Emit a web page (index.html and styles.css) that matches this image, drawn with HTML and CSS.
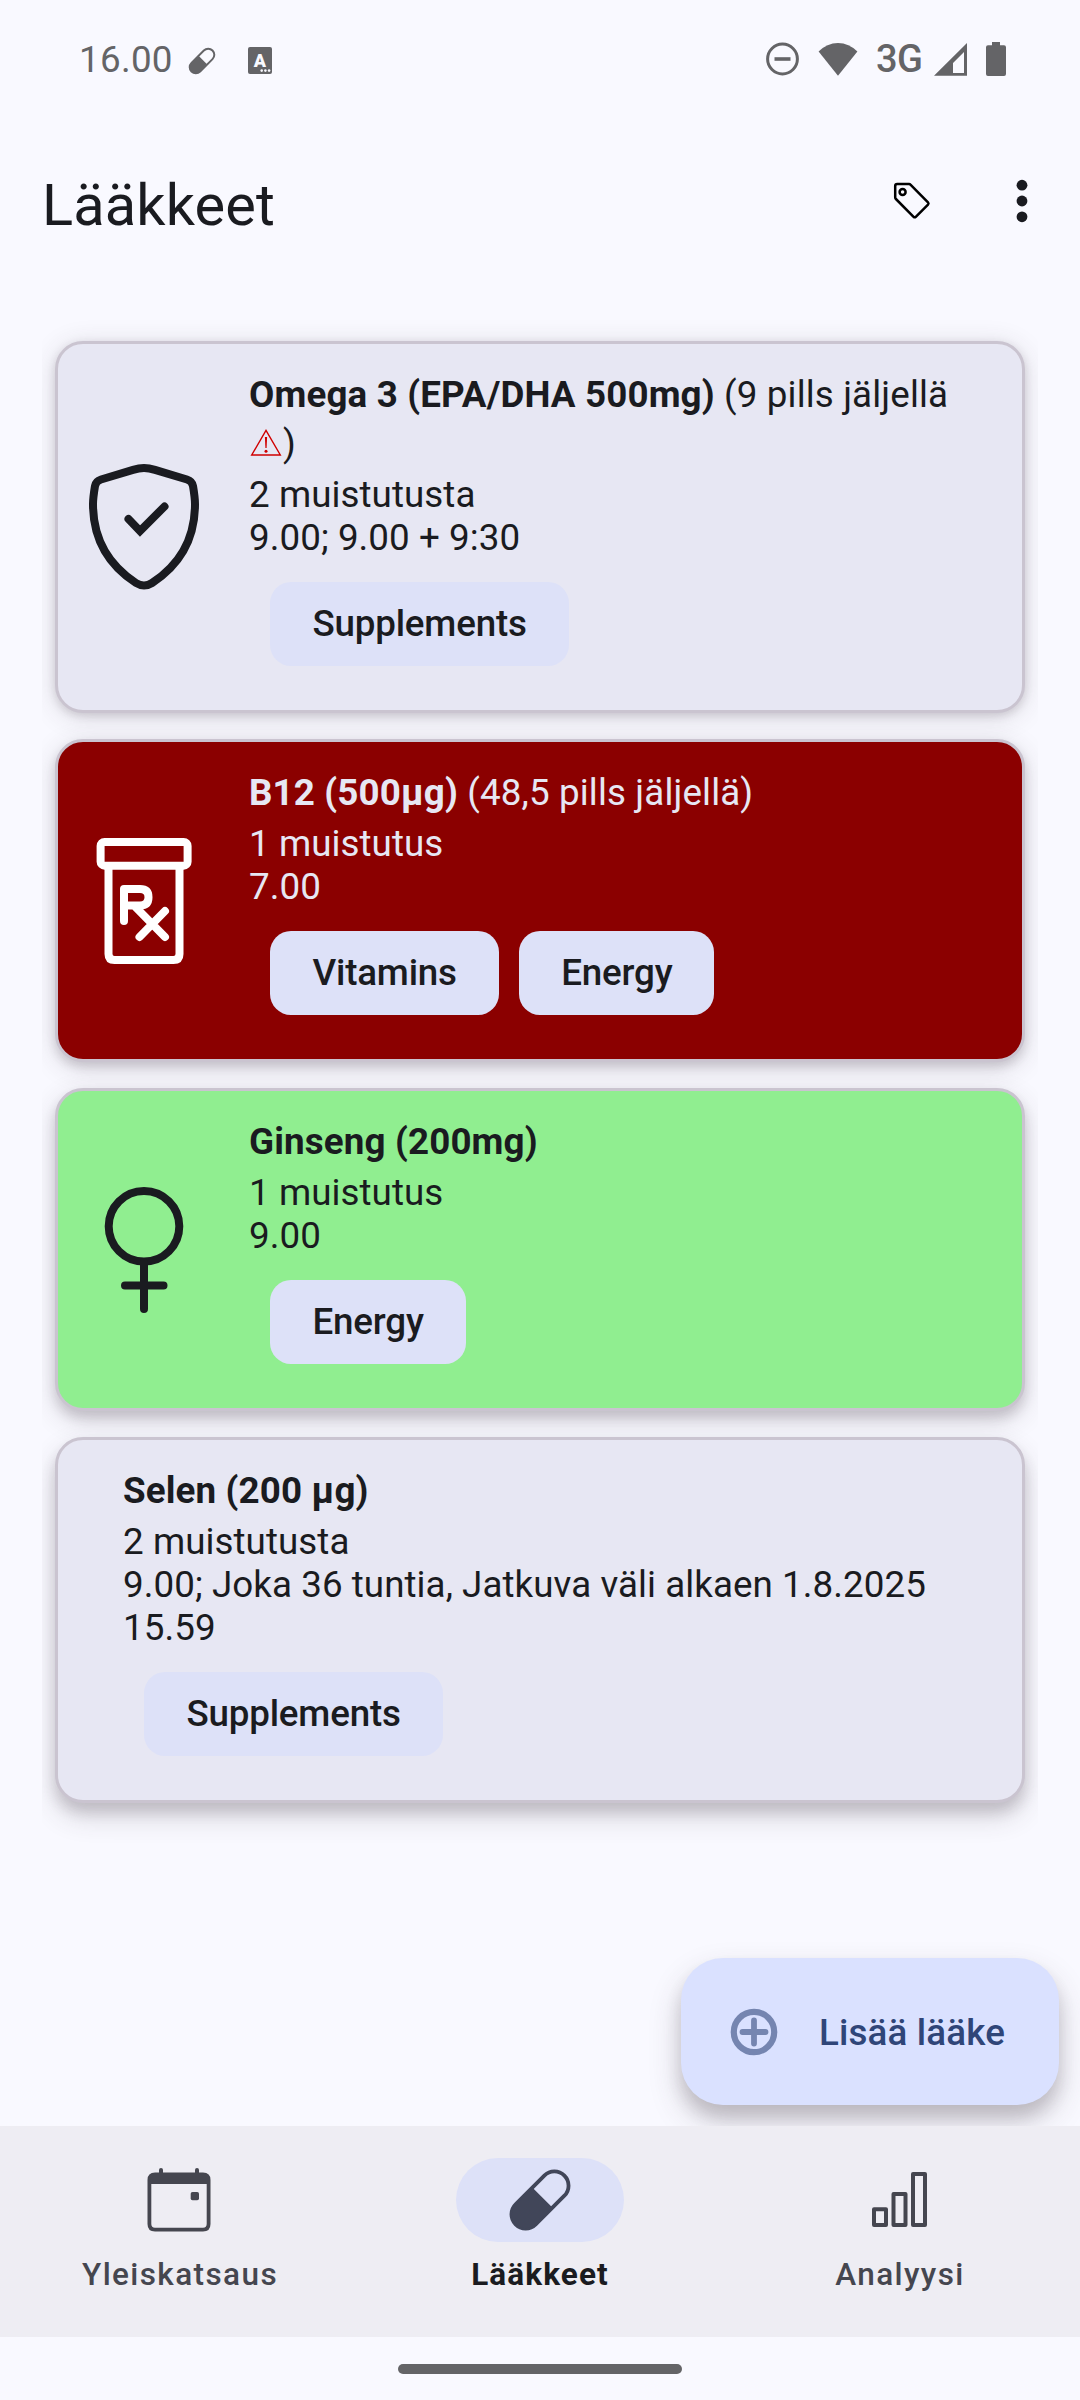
FILE: index.html
```html
<!DOCTYPE html>
<html lang="fi">
<head>
<meta charset="utf-8">
<title>Lääkkeet</title>
<link rel="stylesheet" href="styles.css">
</head>
<body>
<header class="status">
  <span class="clock">16.00</span>
  <svg class="status-pill" width="28" height="28" viewBox="-32 -32 64 64"><g transform="rotate(-45)"><rect x="-34" y="-14" width="68" height="28" rx="14" fill="none" stroke="currentColor" stroke-width="4.5"/><path d="M3-14H-20A14 14 0 0 0-20 14H3z" fill="currentColor"/></g></svg>
  <svg class="status-letter" width="24" height="27" viewBox="0 0 24 27"><rect width="24" height="27" rx="2" fill="currentColor"/><text x="12" y="19.6" class="letter-a">A</text><g fill="#f9f9ff"><circle cx="13.7" cy="23.6" r="1.3"/><circle cx="17.4" cy="23.6" r="1.3"/><circle cx="21.1" cy="23.6" r="1.3"/></g></svg>
  <div class="status-right">
    <svg width="33" height="34" viewBox="0 0 33 34"><circle cx="16.5" cy="17" r="14.9" fill="none" stroke="currentColor" stroke-width="3"/><path d="M8.5 17h16" stroke="currentColor" stroke-width="3.6"/></svg>
    <svg class="wifi" width="40" height="34" viewBox="0 0 40 34"><path d="M.6 9.6Q9 1 20 1T39.4 9.6L20 33.7z" fill="currentColor"/></svg>
    <span class="network">3G</span>
    <svg class="signal" width="33" height="34" viewBox="0 0 33 34"><path fill-rule="evenodd" d="M0 33.7L33 1V33.7zM19 21V31H30V10z" fill="currentColor"/></svg>
    <svg class="battery" width="20" height="34" viewBox="0 0 20 34"><path d="M6 0h8v3.300h4a2 2 0 0 1 2 2V32a2 2 0 0 1-2 2H2a2 2 0 0 1-2-2V5.300a2 2 0 0 1 2-2h4z" fill="currentColor"/></svg>
  </div>
</header>

<div class="toolbar">
  <h1>Lääkkeet</h1>
  <svg class="tag" width="38" height="38" viewBox="0 0 38 38" fill="none" stroke="#000" stroke-width="2.500" stroke-linejoin="round"><path d="M4.200 2.100H16Q17 2.100 17.700 2.800L35 20.400Q36 21.500 35 22.600L22.800 34.800Q21.700 35.900 20.600 34.800L2.900 17Q2.200 16.300 2.200 15.300V4.100Q2.200 2.100 4.200 2.100z"/><circle cx="9.600" cy="9.900" r="3"/></svg>
  <svg class="more" width="12" height="44" viewBox="0 0 12 44" fill="#1a1b20"><circle cx="6" cy="6.200" r="5.400"/><circle cx="6" cy="22" r="5.400"/><circle cx="6" cy="37.800" r="5.400"/></svg>
</div>

<main>
  <div class="list">
    <article class="card shade-1">
      <svg class="icon" width="126" height="126" viewBox="0 0 126 126" fill="none" stroke="currentColor" stroke-width="8" stroke-linecap="round"><path d="M63 4Q58 4 52 5.800L20 15.500Q15 17 14 22C13 28 12 34 12 40C12 76 29 102 55 119Q63 124 71 119C97 102 114 76 114 40C114 34 113 28 112 22Q111 17 106 15.500L74 5.800Q68 4 63 4z"/><path d="M47.500 55L59 67L83.500 42.500"/></svg>
      <div class="body">
        <p class="name"><b>Omega 3 (EPA/DHA 500mg)</b> (9 pills jäljellä <span class="low"><svg class="warn" width="34" height="27" viewBox="0 0 34 27"><path d="M17 1.400L31.300 26H2.700z" fill="none" stroke="#d00000" stroke-width="1.400"/><path d="M15.900 8h2.200l-.5 11h-1.200z" fill="#d00000"/><circle cx="17" cy="22.300" r="1.500" fill="#d00000"/></svg>)</span></p>
        <p>2 muistutusta<br>9.00; 9.00 + 9:30</p>
        <div class="chips"><span class="chip">Supplements</span></div>
      </div>
    </article>

    <article class="card red shade-2">
      <svg class="icon white" width="126" height="126" viewBox="0 0 126 126" fill="none" stroke="currentColor" stroke-width="8" stroke-linecap="round" stroke-linejoin="round"><rect x="19.600" y="4" width="87" height="23.700" rx="4"/><path d="M27.500 28V116Q27.500 122 33.500 122H92.500Q98.500 122 98.500 116V28"/><path d="M43 83V51H59Q67.500 51 67.500 59.200T59 67.400H45M53.500 68L84 99M84 73L58.500 99"/></svg>
      <div class="body">
        <p class="name"><b>B12 (500µg)</b> (48,5 pills jäljellä)</p>
        <p>1 muistutus<br>7.00</p>
        <div class="chips"><span class="chip">Vitamins</span><span class="chip">Energy</span></div>
      </div>
    </article>

    <article class="card green shade-3">
      <svg class="icon" width="126" height="126" viewBox="0 0 126 126" fill="none" stroke="currentColor" stroke-width="8" stroke-linecap="round"><circle cx="63" cy="39.300" r="35.300"/><path d="M63 75V122M44 98.500H82.500"/></svg>
      <div class="body">
        <p class="name"><b>Ginseng (200mg)</b></p>
        <p>1 muistutus<br>9.00</p>
        <div class="chips"><span class="chip">Energy</span></div>
      </div>
    </article>

    <article class="card plain shade-4">
      <div class="body">
        <p class="name"><b>Selen (200 µg)</b></p>
        <p>2 muistutusta<br>9.00; Joka 36 tuntia, Jatkuva väli alkaen 1.8.2025 15.59</p>
        <div class="chips"><span class="chip">Supplements</span></div>
      </div>
    </article>
  </div>

  <button class="fab">
    <svg width="48" height="48" viewBox="0 0 48 48" fill="none" stroke="#7585b0" stroke-width="6.200"><circle cx="24" cy="24" r="20.200"/><path d="M24 12.500V35.500M12.500 24H35.500" stroke-linecap="round" stroke-width="5.800"/></svg>
    <span class="fab-label">Lisää lääke</span>
  </button>
</main>

<nav class="tabs">
  <a class="tab">
    <span class="pad"><svg class="calendar" width="64" height="64" viewBox="0 0 64 64" fill="currentColor"><path fill-rule="evenodd" d="M8 4.500H12V2a2 2 0 0 1 4 0V4.500H48V2a2 2 0 0 1 4 0V4.500H56Q63.500 4.500 63.500 12V56Q63.500 63.500 56 63.500H8Q.5 63.500 .5 56V12Q.5 4.500 8 4.500zM4.300 16V56Q4.300 59.700 8 59.700H56Q59.700 59.700 59.700 56V16z"/><rect x="43.700" y="24" width="8.300" height="8.300" rx="1.800"/></svg></span>
    <span class="label">Yleiskatsaus</span>
  </a>
  <a class="tab active">
    <span class="pad"><svg width="64" height="64" viewBox="-32 -32 64 64"><g transform="rotate(-45)"><rect x="-34.500" y="-14.200" width="69" height="28.400" rx="14.200" fill="none" stroke="currentColor" stroke-width="3.800"/><path d="M3.500-14H-20A14 14 0 0 0-20 14H3.500z" fill="currentColor"/></g></svg></span>
    <span class="label">Lääkkeet</span>
  </a>
  <a class="tab">
    <span class="pad"><svg width="64" height="64" viewBox="0 0 64 64" fill="none" stroke="currentColor" stroke-width="4" stroke-linejoin="round"><rect x="6" y="41.300" width="12" height="15.700"/><rect x="25.500" y="26" width="12" height="31"/><rect x="45" y="6" width="12" height="51"/></svg></span>
    <span class="label">Analyysi</span>
  </a>
</nav>
<footer class="gesture"><span class="handle"></span></footer>
</body>
</html>
```
FILE: styles.css
```css
* { box-sizing: border-box; margin: 0; padding: 0; }

body {
  display: flex;
  flex-direction: column;
  width: 1080px;
  height: 2400px;
  overflow: hidden;
  background: #f9f9ff;
  color: #1a1b20;
  font: 36.75px/43px Roboto, sans-serif;
}

svg { display: block; flex: none; }

.status {
  display: flex;
  align-items: center;
  height: 118px;
  padding: 0 74px 0 79px;
  color: #646467;
}
.clock { width: 109px; letter-spacing: .3px; }
.status-pill { margin-top: 3px; }
.status-letter { margin: 2px 0 0 32px; }
.letter-a {
  fill: #f9f9ff;
  font: 900 18px Roboto, sans-serif;
  text-anchor: middle;
}
.status-right { display: flex; align-items: center; margin-left: auto; }
.wifi { margin-left: 19px; }
.network { margin: 0 0 0 18px; width: 58px; font-size: 38px; font-weight: 500; letter-spacing: -.6px; }
.battery { margin-left: 19px; }

.toolbar {
  display: flex;
  align-items: flex-start;
  height: 174px;
  padding: 53px 52px 0 42px;
}
.toolbar h1 { flex: 1; font-size: 57.75px; font-weight: 400; line-height: 68px; letter-spacing: .12px; }
.tag { margin: 10.500px 85px 0 0; }
.more { margin-top: 8px; }

main { position: relative; height: 1834px; }

.list {
  display: flex;
  flex-direction: column;
  gap: 26px;
  margin: 0 42px;
  padding: 49px 13px 0;
  overflow-x: clip;
}

.card {
  display: flex;
  align-items: center;
  padding: 29px 32px 44px 22px;
  border: 3px solid #cac4d0;
  border-radius: 28px;
  background: #e7e7f3;
}
.icon { margin: 15px 42px 0 1px; }
.white { color: #fff; }
.plain { padding-left: 65px; }
.body { flex: 1; letter-spacing: .06px; }
.red { background: #8b0000; color: #e7e7f3; }
.green { background: #90ee90; }
.shade-1 { box-shadow: 0 3px 8px rgba(60, 50, 60, .16), 0 4px 26px rgba(60, 50, 60, .17); }
.shade-2 { box-shadow: 0 5px 10px rgba(60, 50, 60, .16), 0 6px 26px rgba(60, 50, 60, .18); }
.shade-3 { box-shadow: 0 7px 11px rgba(60, 50, 60, .16), 0 9px 27px rgba(60, 50, 60, .19); }
.shade-4 { box-shadow: 0 9px 13px rgba(60, 50, 60, .16), 0 13px 28px rgba(60, 50, 60, .2); }

.name { margin-bottom: 8px; letter-spacing: .14px; }
.name b { font-weight: 700; }
.low { white-space: nowrap; }
.warn { display: inline-block; margin-top: 13px; vertical-align: baseline; }

.chips { display: flex; gap: 20px; margin: 23px 0 0 21px; }
.chip {
  height: 84px;
  padding: 0 42px 0 42.500px;
  border-radius: 21px;
  background: #dde1f8;
  color: #1a1b20;
  font-weight: 500;
  line-height: 84px;
  letter-spacing: -.2px;
}

.fab {
  position: absolute;
  right: 21px;
  bottom: 21px;
  display: flex;
  align-items: center;
  width: 378px;
  height: 147px;
  padding-left: 49px;
  gap: 41px;
  border: 0;
  border-radius: 42px;
  background: #dae1ff;
  box-shadow: 0 12px 16px rgba(60, 50, 60, .16), 0 16px 32px rgba(60, 50, 60, .22);
  color: #2f4578;
  font: 500 36.75px/43px Roboto, sans-serif;
}
.fab-label { padding-top: 2px; letter-spacing: .15px; }

.tabs {
  position: relative;
  display: flex;
  height: 211px;
  padding-top: 32px;
  background: #eeedf3;
  color: #45464f;
}
.tab { display: flex; flex: 1; flex-direction: column; align-items: center; }
.pad {
  display: flex;
  align-items: center;
  justify-content: center;
  width: 168px;
  height: 84px;
  border-radius: 42px;
}
.calendar { margin-right: 3px; }
.label { margin-top: 14px; font-size: 31.5px; font-weight: 500; line-height: 37px; letter-spacing: 1.4px; }
.active .pad { background: #dde1f8; color: #414659; }
.active .label { color: #1a1b20; font-weight: 700; letter-spacing: 1.1px; }

.gesture { display: flex; justify-content: center; padding-top: 27px; }
.handle { width: 284px; height: 10px; border-radius: 5px; background: #646467; }
```
